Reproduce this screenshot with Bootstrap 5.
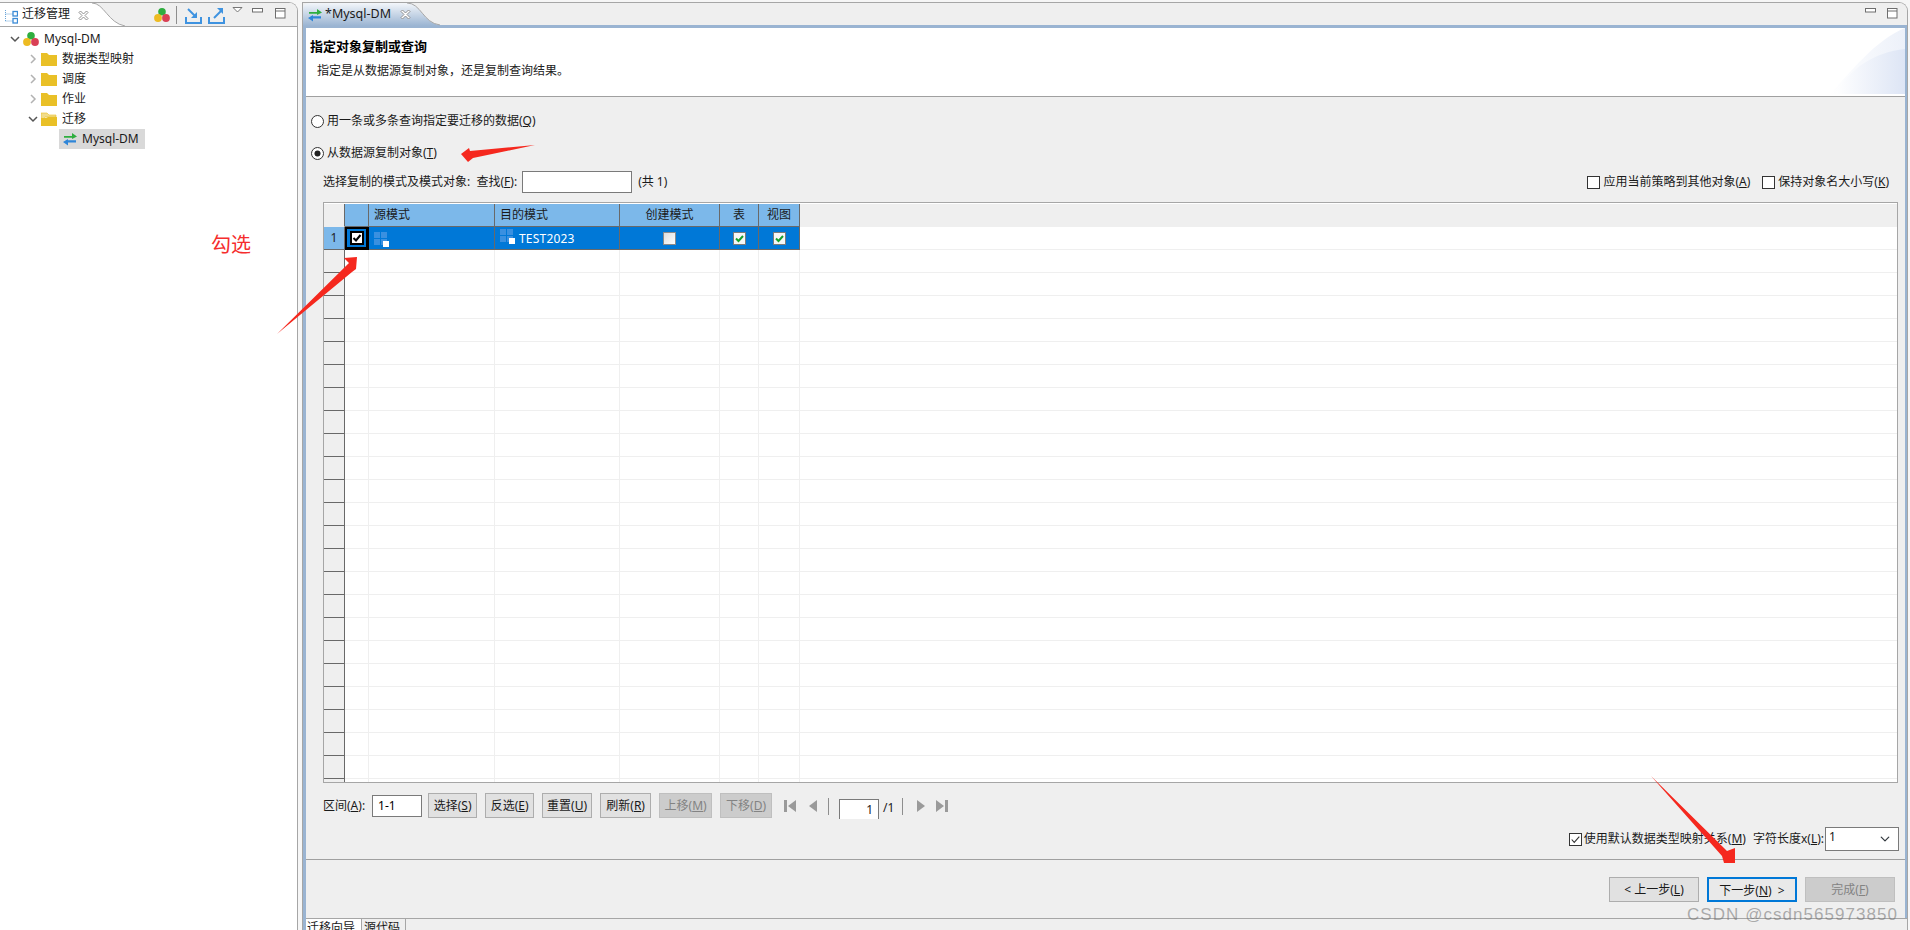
<!DOCTYPE html>
<html lang="zh-CN">
<head>
<meta charset="utf-8">
<title>迁移管理</title>
<link href="https://cdn.jsdelivr.net/npm/bootstrap@5.3.0/dist/css/bootstrap.min.css" rel="stylesheet">
<style>
html,body{height:930px;overflow:hidden}
body{font-family:"Noto Sans","Noto Sans CJK SC",sans-serif;font-size:12px;line-height:16px;color:#1a1a1a;background:#f6f6f6;position:relative}
.appwrap{height:930px;padding-top:2px}
.leftpane{width:298px;height:928px;flex:none;background:#fff;border:1px solid #a6a6a6;border-left:0;border-bottom:0;border-top-right-radius:9px;overflow:hidden}
.tabstrip{height:23px;flex:none;position:relative;background:#efefef}
.tabshape{position:absolute;left:0;top:0}
.tabtext{position:absolute;top:3px;white-space:nowrap}
.stripicon{position:absolute}
.treepane{padding-top:2px;border-top:1px solid #a6a6a6;margin-top:0}
.treerow{height:20px;white-space:nowrap}
.tw{display:inline-flex;justify-content:center;width:16px;flex:none}
.lvl0{padding-left:7px}
.lvl1{padding-left:25px}
.lvl2{margin-left:59px;width:86px;padding-left:3px;background:#d9d9d9}
.treerow .lbl{margin-left:5px}
.editor{width:1606px;margin-left:4px;height:928px;flex:none;background:#efefef;border:1px solid #a6a6a6;border-bottom:0;border-top-right-radius:9px;overflow:hidden}
.edframe{border:3px solid #9ab4d2;border-bottom:0;border-right-width:2px;border-top-width:3px;margin-top:0;flex:1;min-height:0;margin-right:0}
.wizhead{height:68px;background:#fff;position:relative;padding:9px 0 0 4px;flex:none;margin-top:0}
.wiztitle{font-size:13px;font-weight:700;color:#000;line-height:18px}
.wizsub{margin:8px 0 0 7px;line-height:16px;color:#222}
.wizcorner{position:absolute;right:0;top:0}
.wizline{height:1px;background:#a0a0a0;flex:none}
.wizbody{padding:16px 6px 8px 5px;flex:none;height:762px}
.form-check-input.optctl{width:13px;height:13px;margin:0;flex:none;background-color:#fff;border:1px solid #333;box-shadow:none}
.form-check-input.optctl[type=checkbox]{border-radius:0}
.form-check-input.optctl:checked{background-color:#fff;border-color:#333}
.form-check-input.optctl:checked[type=radio]{--bs-form-check-bg-image:url("data:image/svg+xml,%3csvg xmlns='http://www.w3.org/2000/svg' viewBox='-4 -4 8 8'%3e%3ccircle r='2.2' fill='%23222'/%3e%3c/svg%3e")}
.form-check-input.optctl:checked[type=checkbox]{--bs-form-check-bg-image:url("data:image/svg+xml,%3csvg xmlns='http://www.w3.org/2000/svg' viewBox='0 0 13 13'%3e%3cpath fill='none' stroke='%23333' stroke-width='1.3' d='M2 6.5l3 3.5 6-7'/%3e%3c/svg%3e")}
.radrow{height:16px;margin-bottom:16px}
.radrow .txt{margin-left:3px}
.findrow{height:22px;margin-top:-6px;padding-left:12px}
.findinput{width:110px;height:22px;border:1px solid #7a7a7a;background:#fff;margin:0 6px 0 5px;border-radius:0;padding:0 3px;font-size:12px}
.ckgroup .txt{margin-left:3px;margin-right:12px}
.gridwrap{height:581px;margin:9px 1px 0 12px;border:1px solid #a6a6a6;padding-top:1px;overflow:hidden;background:#fff}
.gridtbl{table-layout:fixed;width:1577px;border-collapse:separate;border-spacing:0;margin:0}
.gridtbl>*>tr>*{height:23px;padding:0;border:0;border-right:1px solid #efefef;border-bottom:1px solid #efefef;background:#fff;line-height:20px;font-weight:400;box-shadow:none;vertical-align:middle}
.gridtbl>*>tr>*:first-child{background:#efefef;border-right:1px solid #696969;border-bottom:1px solid #696969;text-align:center}
.gridtbl thead tr>*{background:#7cb8ea;border-right:1px solid #696969;border-bottom:1px solid #696969;padding-left:5px;color:#1a1a1a;height:23px}
.gridtbl thead tr>.hdfill{background:#efefef;border:0;border-bottom:0}
.gridtbl thead tr>*:first-child{border-bottom:1px solid #efefef;border-right:1px solid #696969}
.gridtbl thead .ctr{text-align:center;padding-left:0}
.gridtbl .selrow>*{background:#0078d7;color:#fff;border-right:1px solid #696969;border-bottom:1px solid #696969}
.gridtbl .selrow>*:first-child{background:#7cb8ea;color:#222}
.gridtbl .selrow>.focuscell{box-shadow:inset 0 0 0 2px #000;border-color:#000;background:#0078d7;text-align:center}
.gridtbl .selrow>.fillcell{background:#fff;border:0;border-bottom:1px solid #efefef}
.selcell{white-space:nowrap;padding:2px 0 0 5px!important;line-height:0!important}
.selcell .tname{line-height:20px;vertical-align:top;margin-left:4px;letter-spacing:.2px}
.ctrcell{text-align:center;line-height:0!important}
.toolrow{height:25px;margin:10px 0 0 12px}
.rangeinput{width:50px;height:22px;border:1px solid #7a7a7a;background:#fff;margin:0 6px 0 7px;padding:0 5px;font-size:12px;border-radius:0}
.btn.wbtn{--bs-btn-padding-y:0;--bs-btn-padding-x:0;--bs-btn-font-size:12px;--bs-btn-line-height:23px;--bs-btn-border-radius:0;--bs-btn-color:#1a1a1a;--bs-btn-bg:#e1e1e1;--bs-btn-border-color:#adadad;--bs-btn-hover-bg:#e1e1e1;--bs-btn-hover-border-color:#adadad;--bs-btn-disabled-bg:#ccc;--bs-btn-disabled-border-color:#bfbfbf;--bs-btn-disabled-color:#838383;--bs-btn-disabled-opacity:1;height:25px;flex:none;white-space:nowrap}
.w49{width:49px}.w50{width:50px}.w51{width:51px}.w52{width:52px}.w53{width:53px}.w90{width:90px}
.pagergroup{margin-left:12px;height:25px}
.pagesep{width:1px;height:17px;background:#8e8e8e;margin-top:5px;flex:none}
.pageinput{width:40px;height:20px;margin:6px 4px 0 10px;border:1px solid #7a7a7a;border-bottom:0;background:#fff;text-align:right;padding:0 5px 0 0;font-size:12px;border-radius:0;line-height:20px}
.pagetotal{margin-top:7px;margin-right:8px}
.optrow{height:24px;margin:9px 0 0 0;padding-right:0}
.optrow .txt{margin-left:2px}
.lenlabel{margin-left:7px;margin-right:1px}
.form-select.lensel{width:74px;height:24px;padding:0 0 4px 3px;font-size:12px;line-height:16px;border:1px solid #7a7a7a;border-radius:0;color:#1a1a1a;background-size:12px 10px;background-position:right 7px center;box-shadow:none}
.wizfoot{height:59px;border-top:1px solid #a0a0a0;padding:17px 10px 0 0;flex:none;gap:8px}
.btn.wbtn.primarybtn{--bs-btn-border-color:#0078d7;border-width:2px;background:#e9e9e9}
.bottabs{height:12px;border-top:1px solid #a6a6a6;margin:0 -2px 0 0;overflow:hidden;flex:none;background:#efefef}
.bottab{height:30px;line-height:18px;white-space:nowrap}
.bottab.on{background:#fff;width:55px;padding-left:1px}
.bottab.off{border:1px solid #a6a6a6;border-top:0;width:45px;padding-left:2px}
.annot{position:absolute;left:0;top:0;pointer-events:none}
.annotxt{position:absolute;left:211px;top:230px;font-size:20px;line-height:28px;color:#f52d2d;white-space:nowrap;font-family:"Noto Sans CJK SC",sans-serif}
.wmark{position:absolute;left:1687px;top:904px;font:17px/22px "Liberation Sans",sans-serif;letter-spacing:1.05px;color:rgba(110,110,110,.55);white-space:nowrap}
u{text-underline-offset:1px}
</style>
</head>
<body>
<svg width="0" height="0" class="position-absolute">
  <defs>
    <symbol id="tri" viewBox="0 0 16 16"><circle cx="8" cy="4.7" r="3.8" fill="#2fae3f"/><circle cx="4" cy="11" r="3.9" fill="#edbb22"/><circle cx="12" cy="11" r="3.9" fill="#d94055"/></symbol>
    <symbol id="folder" viewBox="0 0 16 14"><path d="M0 1h6l2 2h8v11H0z" fill="#e9c027"/></symbol>
    <symbol id="folderopen" viewBox="0 0 16 14"><path d="M0 1h6l2 2h7v2H4L0 11z" fill="#f1dc8b" stroke="#e9c027" stroke-width=".6"/><path d="M0 14V6h5l2-1h9v9z" fill="#e9c027"/></symbol>
    <symbol id="migr" viewBox="0 0 16 14"><path d="M2 4h8V1l5 3.6-5 2.4V5.700H2z" fill="#2fae3f"/><path d="M14 8.300H6V7L1 10l5 3.400v-3h8z" fill="#2f86d8"/></symbol>
    <symbol id="xclose" viewBox="0 0 11 11"><path d="M1 2.500L2.500 1 5.500 4 8.500 1 10 2.500 7 5.500 10 8.500 8.500 10 5.500 7 2.500 10 1 8.500 4 5.500z" fill="#fff" stroke="#8f8f8f"/></symbol>
    <symbol id="schema" viewBox="0 0 15 15"><path d="M0 0h6v6H0zM7 0h6v6H7zM0 7h6v6H0z" fill="#3a90e0"/><path d="M7 7h6v2H9v4H7z" fill="#3a90e0"/><path d="M9 9h6v6H9z" fill="#fff"/></symbol>
    <symbol id="gcheck" viewBox="0 0 13 13"><rect x=".5" y=".5" width="12" height="12" fill="#f6f6f6" stroke="#7b7b7b"/><path d="M3 6.500l2.500 2.500L10 4" fill="none" stroke="#16a02c" stroke-width="2"/></symbol>
  </defs>
</svg>

<div class="appwrap d-flex">
  <aside class="leftpane d-flex flex-column">
    <div class="tabstrip">
      <svg class="tabshape" width="130" height="24"><path d="M0 0H92C104 0 108 20 125 23L130 24H0z" fill="#fff"/><path d="M92 0C104 0 108 20 125 23" fill="none" stroke="#a6a6a6"/></svg>
      <svg class="stripicon" style="left:4px;top:6px" width="14" height="15" viewBox="0 0 14 15"><path d="M1.500 1v11M1.500 5h8M1.500 12h8" stroke="#6aa5d8" stroke-dasharray="1 1" fill="none"/><rect x="9" y="2.500" width="4.500" height="4.500" fill="#fff" stroke="#3b8bd6" stroke-width="1.300"/><rect x="9" y="9.500" width="4.500" height="4.500" fill="#fff" stroke="#3b8bd6" stroke-width="1.300"/></svg>
      <span class="tabtext" style="left:22px">迁移管理</span>
      <svg class="stripicon" style="left:78px;top:7px" width="11" height="11"><use href="#xclose"/></svg>
      <svg class="stripicon" style="left:154px;top:4px" width="16" height="16"><use href="#tri"/></svg>
      <span class="stripicon" style="left:176px;top:3px;width:1px;height:18px;background:#8e8e8e"></span>
      <svg class="stripicon" style="left:185px;top:5px" width="17" height="16" viewBox="0 0 17 16"><path d="M1 9v6h15V9" fill="none" stroke="#3f93e0" stroke-width="2"/><path d="M3 1l7 7" stroke="#3f93e0" stroke-width="2"/><path d="M6 10h6V4z" fill="#3f93e0"/></svg>
      <svg class="stripicon" style="left:208px;top:5px" width="17" height="16" viewBox="0 0 17 16"><path d="M1 9v6h15V9" fill="none" stroke="#3f93e0" stroke-width="2"/><path d="M6 10l7-7" stroke="#3f93e0" stroke-width="2"/><path d="M9 0h6v6z" fill="#3f93e0"/></svg>
      <svg class="stripicon" style="left:232px;top:4px" width="11" height="6"><path d="M1 .5h9L5.500 5z" fill="#fff" stroke="#777"/></svg>
      <svg class="stripicon" style="left:252px;top:5px" width="11" height="5"><rect x=".5" y=".5" width="10" height="3.500" fill="#fff" stroke="#6e6e6e"/></svg>
      <svg class="stripicon" style="left:275px;top:5px" width="11" height="11"><rect x=".5" y=".5" width="9.500" height="9.500" fill="#fff" stroke="#6e6e6e"/><path d="M.5 3h9.500" stroke="#6e6e6e"/></svg>
    </div>
    <div class="treepane flex-grow-1 position-relative">
      <div class="treerow d-flex align-items-center lvl0"><span class="tw"><svg width="10" height="7"><path d="M1 1l4 4 4-4" fill="none" stroke="#555" stroke-width="1.500"/></svg></span><svg width="16" height="16"><use href="#tri"/></svg><span class="lbl">Mysql-DM</span></div>
      <div class="treerow d-flex align-items-center lvl1"><span class="tw"><svg width="7" height="10"><path d="M1 1l4 4-4 4" fill="none" stroke="#b2b2b2" stroke-width="1.500"/></svg></span><svg width="16" height="14"><use href="#folder"/></svg><span class="lbl">数据类型映射</span></div>
      <div class="treerow d-flex align-items-center lvl1"><span class="tw"><svg width="7" height="10"><path d="M1 1l4 4-4 4" fill="none" stroke="#b2b2b2" stroke-width="1.500"/></svg></span><svg width="16" height="14"><use href="#folder"/></svg><span class="lbl">调度</span></div>
      <div class="treerow d-flex align-items-center lvl1"><span class="tw"><svg width="7" height="10"><path d="M1 1l4 4-4 4" fill="none" stroke="#b2b2b2" stroke-width="1.500"/></svg></span><svg width="16" height="14"><use href="#folder"/></svg><span class="lbl">作业</span></div>
      <div class="treerow d-flex align-items-center lvl1"><span class="tw"><svg width="10" height="7"><path d="M1 1l4 4 4-4" fill="none" stroke="#555" stroke-width="1.500"/></svg></span><svg width="16" height="14"><use href="#folderopen"/></svg><span class="lbl">迁移</span></div>
      <div class="treerow d-flex align-items-center lvl2"><svg width="16" height="14"><use href="#migr"/></svg><span class="lbl" style="margin-left:4px">Mysql-DM</span></div>
    </div>
  </aside>

  <main class="editor d-flex flex-column">
    <div class="tabstrip flex-none" style="height:22px">
      <svg class="tabshape" width="140" height="23"><defs><linearGradient id="tabg" x1="0" x2="0" y1="0" y2="1"><stop offset="0" stop-color="#f3f6fa"/><stop offset="1" stop-color="#9ab4d2"/></linearGradient></defs><path d="M0 23V6Q0 0 6 0H104C118 0 120 20 137 22L140 23z" fill="url(#tabg)"/><path d="M104 0C118 0 120 20 137 22" fill="none" stroke="#a6a6a6"/></svg>
      <svg class="stripicon" style="left:4px;top:5px" width="16" height="14"><use href="#migr"/></svg>
      <span class="tabtext" style="left:22px;font-size:12.5px">*Mysql-DM</span>
      <svg class="stripicon" style="left:97px;top:6px" width="11" height="11"><use href="#xclose"/></svg>
      <svg class="stripicon" style="left:1562px;top:5px" width="11" height="5"><rect x=".5" y=".5" width="10" height="3.500" fill="#fff" stroke="#6e6e6e"/></svg>
      <svg class="stripicon" style="left:1584px;top:5px" width="11" height="11"><rect x=".5" y=".5" width="9.500" height="9.500" fill="#fff" stroke="#6e6e6e"/><path d="M.5 3h9.500" stroke="#6e6e6e"/></svg>
    </div>
    <div class="edframe d-flex flex-column">
      <div class="wizhead">
        <div class="wiztitle">指定对象复制或查询</div>
        <div class="wizsub">指定是从数据源复制对象，还是复制查询结果。</div>
        <svg class="wizcorner" width="75" height="66" viewBox="0 0 75 66"><defs><linearGradient id="cg" x1="0" x2="1" y1="0" y2="0"><stop offset="0" stop-color="#fff"/><stop offset="1" stop-color="#dde5f5"/></linearGradient></defs><path d="M0 66C20 45 45 12 75 0V66z" fill="url(#cg)" opacity=".55"/><path d="M5 66C20 40 45 24 75 21V66z" fill="url(#cg)"/></svg>
      </div>
      <div class="wizline"></div>
      <div class="wizbody">
        <div class="radrow d-flex align-items-center"><input class="form-check-input optctl" type="radio" name="src" aria-label="query"><span class="txt">用一条或多条查询指定要迁移的数据(<u>Q</u>)</span></div>
        <div class="radrow d-flex align-items-center"><input class="form-check-input optctl" type="radio" name="src" checked aria-label="objects"><span class="txt">从数据源复制对象(<u>T</u>)</span></div>
        <div class="findrow d-flex align-items-center">
          <span>选择复制的模式及模式对象:&nbsp; 查找(<u>F</u>):</span>
          <input class="findinput" type="text" aria-label="find">
          <span>(共 1)</span>
          <div class="ms-auto d-flex align-items-center ckgroup">
            <input class="form-check-input optctl" type="checkbox" aria-label="apply"><span class="txt">应用当前策略到其他对象(<u>A</u>)</span>
            <input class="form-check-input optctl" type="checkbox" aria-label="case"><span class="txt" style="margin-right:10px">保持对象名大小写(<u>K</u>)</span>
          </div>
        </div>
        <div class="gridwrap">
          <table class="table gridtbl">
            <colgroup><col style="width:21px"><col style="width:24px"><col style="width:126px"><col style="width:125px"><col style="width:100px"><col style="width:39px"><col style="width:41px"><col></colgroup>
            <thead><tr><th></th><th></th><th>源模式</th><th>目的模式</th><th class="ctr">创建模式</th><th class="ctr">表</th><th class="ctr">视图</th><th class="hdfill"></th></tr></thead>
            <tbody>
              <tr class="selrow"><td>1</td><td class="focuscell ctrcell"><svg width="14" height="14" viewBox="0 0 14 14"><rect x="1" y="1" width="12" height="12" fill="#fff" stroke="#000" stroke-width="2"/><path d="M3.500 7l2.500 2.500L10.500 4" fill="none" stroke="#000" stroke-width="2"/></svg></td><td class="selcell"><svg width="15" height="15"><use href="#schema"/></svg></td><td class="selcell"><svg width="15" height="15"><use href="#schema"/></svg><span class="tname">TEST2023</span></td><td class="ctrcell"><svg width="13" height="13"><defs><linearGradient id="bx" x1="0" y1="0" x2="1" y2="1"><stop offset="0" stop-color="#dcdcdc"/><stop offset="1" stop-color="#fff"/></linearGradient></defs><rect x=".5" y=".5" width="12" height="12" fill="url(#bx)" stroke="#8a8a8a"/></svg></td><td class="ctrcell"><svg width="13" height="13"><use href="#gcheck"/></svg></td><td class="ctrcell"><svg width="13" height="13"><use href="#gcheck"/></svg></td><td class="fillcell"></td></tr>
              <tr><td></td><td></td><td></td><td></td><td></td><td></td><td></td><td></td></tr>
              <tr><td></td><td></td><td></td><td></td><td></td><td></td><td></td><td></td></tr>
              <tr><td></td><td></td><td></td><td></td><td></td><td></td><td></td><td></td></tr>
              <tr><td></td><td></td><td></td><td></td><td></td><td></td><td></td><td></td></tr>
              <tr><td></td><td></td><td></td><td></td><td></td><td></td><td></td><td></td></tr>
              <tr><td></td><td></td><td></td><td></td><td></td><td></td><td></td><td></td></tr>
              <tr><td></td><td></td><td></td><td></td><td></td><td></td><td></td><td></td></tr>
              <tr><td></td><td></td><td></td><td></td><td></td><td></td><td></td><td></td></tr>
              <tr><td></td><td></td><td></td><td></td><td></td><td></td><td></td><td></td></tr>
              <tr><td></td><td></td><td></td><td></td><td></td><td></td><td></td><td></td></tr>
              <tr><td></td><td></td><td></td><td></td><td></td><td></td><td></td><td></td></tr>
              <tr><td></td><td></td><td></td><td></td><td></td><td></td><td></td><td></td></tr>
              <tr><td></td><td></td><td></td><td></td><td></td><td></td><td></td><td></td></tr>
              <tr><td></td><td></td><td></td><td></td><td></td><td></td><td></td><td></td></tr>
              <tr><td></td><td></td><td></td><td></td><td></td><td></td><td></td><td></td></tr>
              <tr><td></td><td></td><td></td><td></td><td></td><td></td><td></td><td></td></tr>
              <tr><td></td><td></td><td></td><td></td><td></td><td></td><td></td><td></td></tr>
              <tr><td></td><td></td><td></td><td></td><td></td><td></td><td></td><td></td></tr>
              <tr><td></td><td></td><td></td><td></td><td></td><td></td><td></td><td></td></tr>
              <tr><td></td><td></td><td></td><td></td><td></td><td></td><td></td><td></td></tr>
              <tr><td></td><td></td><td></td><td></td><td></td><td></td><td></td><td></td></tr>
              <tr><td></td><td></td><td></td><td></td><td></td><td></td><td></td><td></td></tr>
              <tr><td></td><td></td><td></td><td></td><td></td><td></td><td></td><td></td></tr>
              <tr><td></td><td></td><td></td><td></td><td></td><td></td><td></td><td></td></tr>
            </tbody>
          </table>
        </div>
        <div class="toolrow d-flex align-items-center">
          <span>区间(<u>A</u>):</span>
          <input class="rangeinput" type="text" value="1-1" aria-label="range">
          <div class="d-flex gap-2">
            <button class="btn wbtn w49" type="button">选择(<u>S</u>)</button>
            <button class="btn wbtn w49" type="button">反选(<u>E</u>)</button>
            <button class="btn wbtn w50" type="button">重置(<u>U</u>)</button>
            <button class="btn wbtn w51" type="button">刷新(<u>R</u>)</button>
            <button class="btn wbtn w53" type="button" disabled>上移(<u>M</u>)</button>
            <button class="btn wbtn w52" type="button" disabled>下移(<u>D</u>)</button>
          </div>
          <div class="pagergroup d-flex align-items-start">
            <svg width="12" height="14" class="mt-1 me-2" style="margin-top:6px!important" viewBox="0 0 12 14"><path d="M0 1h3v12H0zM12 1v12L4 7z" fill="#9a9a9a"/></svg>
            <svg width="10" height="14" class="ms-1" style="margin-top:6px;margin-right:10px" viewBox="0 0 10 14"><path d="M9 1v12L1 7z" fill="#9a9a9a"/></svg>
            <span class="pagesep"></span>
            <div class="pageinput">1</div>
            <span class="pagetotal">/1</span>
            <span class="pagesep"></span>
            <svg width="10" height="14" style="margin:6px 10px 0 13px" viewBox="0 0 10 14"><path d="M1 1v12l8-6z" fill="#9a9a9a"/></svg>
            <svg width="12" height="14" style="margin-top:6px" viewBox="0 0 12 14"><path d="M12 1H9v12h3zM0 1v12l8-6z" fill="#9a9a9a"/></svg>
          </div>
        </div>
        <div class="optrow d-flex align-items-center justify-content-end">
          <input class="form-check-input optctl" type="checkbox" checked aria-label="default"><span class="txt">使用默认数据类型映射关系(<u>M</u>)</span>
          <span class="lenlabel">字符长度x(<u>L</u>):</span>
          <select class="form-select lensel" aria-label="length"><option>1</option></select>
        </div>
      </div>
      <div class="wizfoot d-flex justify-content-end">
        <button class="btn wbtn w90" type="button">&lt; 上一步(<u>L</u>)</button>
        <button class="btn wbtn w90 primarybtn" type="button">下一步(<u>N</u>)&nbsp; &gt;</button>
        <button class="btn wbtn w90" type="button" disabled>完成(<u>F</u>)</button>
      </div>
      <div class="bottabs d-flex">
        <div class="bottab on">迁移向导</div>
        <div class="bottab off">源代码</div>
      </div>
    </div>
  </main>
</div>

<svg class="annot" width="1910" height="930">
  <polygon points="461,154 469,148 470,151 535,145 473,158 468,162" fill="#f5281e"/>
  <polygon points="357,257 344,258 349,263 277,334 352,272 356,269" fill="#f5281e"/>
  <polygon points="1651,776 1727,851 1735,848 1735,863 1724,863 1722,856" fill="#f5281e"/>
</svg>
<span class="annotxt">勾选</span>
<span class="wmark">CSDN @csdn565973850</span>
</body>
</html>
